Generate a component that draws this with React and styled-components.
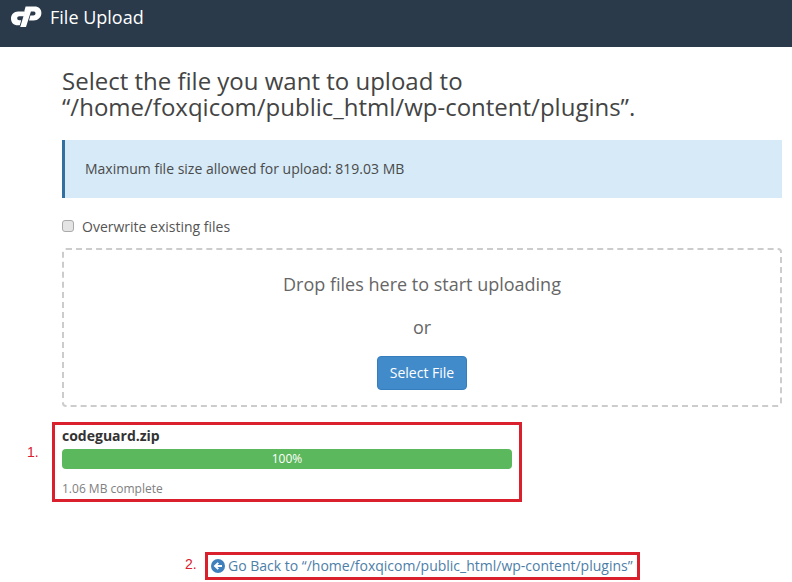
import React from 'react'
import styled, { createGlobalStyle } from 'styled-components'

const Global = createGlobalStyle`
  html, body {
    margin: 0;
    padding: 0;
    background: #fff;
    font-family: "Open Sans", sans-serif;
    color: #333;
  }
  * { box-sizing: border-box; }
`;

function CpLogo() {
  return (
    <LogoMark viewBox="0 0 31 23" aria-hidden="true">
      <path fill="#fff" d="M7 6.5H14.4L13 11.2H8.4C7 11.2 6.2 12 6.2 13.2 6.2 14.4 7 15.2 8.2 15.2H10.2L8.8 20.2H6.8C2.6 20.2 0 17.4 0 13.4 0 9.4 3 6.5 7 6.5Z" />
      <path fill="#fff" d="M14.6 1.6H23.6C27.8 1.6 30.4 4.2 30.4 7.9 30.4 12.2 27 15.4 22.6 15.4H18L19.4 10.6H22.2C23.6 10.6 24.5 9.6 24.5 8.3 24.5 7 23.6 6.4 22.4 6.4H19.9L15 22H9.2L13.9 6.4H13.2Z" />
    </LogoMark>
  );
}

export default function App() {
  return (
    <>
      <Global />
      <Header>
        <CpLogo />
        <PageTitle>File Upload</PageTitle>
      </Header>

      <Main>
        <Heading>
          Select the file you want to upload to
          <br />
          “/home/foxqicom/public_html/wp-content/plugins”.
        </Heading>

        <Alert>Maximum file size allowed for upload: 819.03 MB</Alert>

        <CheckRow>
          <CheckBox type="checkbox" />
          Overwrite existing files
        </CheckRow>

        <DropZone>
          <DropText>Drop files here to start uploading</DropText>
          <OrText>or</OrText>
          <SelectButton>Select File</SelectButton>
        </DropZone>

        <FileBox>
          <StepNumber $left={-28} $top={19}>1.</StepNumber>
          <FileName>codeguard.zip</FileName>
          <ProgressTrack>
            <ProgressBar style={{ width: '100%' }}>100%</ProgressBar>
          </ProgressTrack>
          <Complete>1.06 MB complete</Complete>
        </FileBox>

        <BackRow>
          <BackBox>
            <StepNumber $left={-23} $top={1}>2.</StepNumber>
            <BackIcon viewBox="0 0 14 14" aria-hidden="true">
              <circle cx="7" cy="7" r="7" fill="#3f7fbc" />
              <path fill="#fff" d="M2.6 7 6.6 3.2 8 4.6 6.4 6H11V8H6.4L8 9.4 6.6 10.8Z" />
            </BackIcon>
            <BackLink href="#">Go Back to “/home/foxqicom/public_html/wp-content/plugins”</BackLink>
          </BackBox>
        </BackRow>
      </Main>
    </>
  );
}

const Header = styled.header`
  height: 47px;
  background: #2a3a4b;
  display: flex;
  align-items: flex-start;
  padding: 4px 0 0 11px;
  gap: 8px;
`;

const LogoMark = styled.svg`
  width: 31px;
  height: 23px;
  margin-top: 1px;
  flex: none;
`;

const PageTitle = styled.h1`
  margin: 0;
  color: #fff;
  font-size: 18px;
  font-weight: 400;
  line-height: 26px;
`;

const Main = styled.main`
  padding: 0 10px 0 62px;
`;

const Heading = styled.h2`
  margin: 21px 0 0;
  font-size: 24px;
  font-weight: 400;
  line-height: 26px;
  color: #444;
`;

const Alert = styled.div`
  margin-top: 20px;
  height: 58px;
  display: flex;
  align-items: center;
  padding: 0 0 1px 20px;
  background: #d6eaf8;
  border-left: 3px solid #31709f;
  font-size: 14px;
  color: #4a4a4a;
`;

const CheckRow = styled.label`
  margin-top: 18px;
  display: flex;
  align-items: center;
  gap: 8px;
  height: 20px;
  font-size: 14px;
  color: #555;
`;

const CheckBox = styled.input`
  appearance: none;
  margin: 0;
  width: 12px;
  height: 12px;
  background: #e4e4e4;
  border: 1px solid #aaa;
  border-radius: 3px;
`;

const DropZone = styled.div`
  margin-top: 12px;
  height: 159px;
  border: 2px dashed #ccc;
  border-radius: 4px;
  display: flex;
  flex-direction: column;
  align-items: center;
  padding-top: 22px;
`;

const DropText = styled.div`
  font-size: 18px;
  line-height: 25px;
  color: #666;
`;

const OrText = styled.div`
  margin-top: 18px;
  font-size: 18px;
  line-height: 25px;
  color: #666;
`;

const SelectButton = styled.button`
  margin-top: 16px;
  width: 90px;
  height: 34px;
  padding: 0 0 2px;
  border: 1px solid #357ebd;
  border-radius: 4px;
  background: #428bca;
  color: #fff;
  font-family: inherit;
  font-size: 14px;
`;

const FileBox = styled.section`
  position: relative;
  margin: 15px 0 0 -10px;
  width: 470px;
  height: 80px;
  border: 3px solid #d9202c;
  padding: 1px 7px 0;
`;

const StepNumber = styled.span`
  position: absolute;
  left: ${p => p.$left}px;
  top: ${p => p.$top}px;
  font-family: "Liberation Sans", sans-serif;
  font-size: 14px;
  color: #d9202c;
`;

const FileName = styled.div`
  font-size: 14px;
  font-weight: 700;
  line-height: 20px;
  color: #333;
`;

const ProgressTrack = styled.div`
  margin-top: 3px;
  height: 20px;
  border-radius: 4px;
  overflow: hidden;
  background: #f5f5f5;
`;

const ProgressBar = styled.div`
  height: 100%;
  background: #5cb85c;
  color: #fff;
  font-size: 12px;
  line-height: 20px;
  text-align: center;
`;

const Complete = styled.div`
  margin-top: 11px;
  font-size: 12px;
  line-height: 17px;
  color: #808080;
`;

const BackRow = styled.div`
  margin-top: 50px;
  display: flex;
  justify-content: flex-start;
  padding-left: 143px;
`;

const BackBox = styled.div`
  position: relative;
  width: 435px;
  height: 28px;
  border: 3px solid #d9202c;
  display: flex;
  align-items: center;
  gap: 3px;
  padding: 0 0 1px 3px;
`;

const BackIcon = styled.svg`
  width: 14px;
  height: 14px;
  flex: none;
`;

const BackLink = styled.a`
  font-size: 14px;
  color: #4d7ea8;
  text-decoration: none;
  white-space: nowrap;
`;
